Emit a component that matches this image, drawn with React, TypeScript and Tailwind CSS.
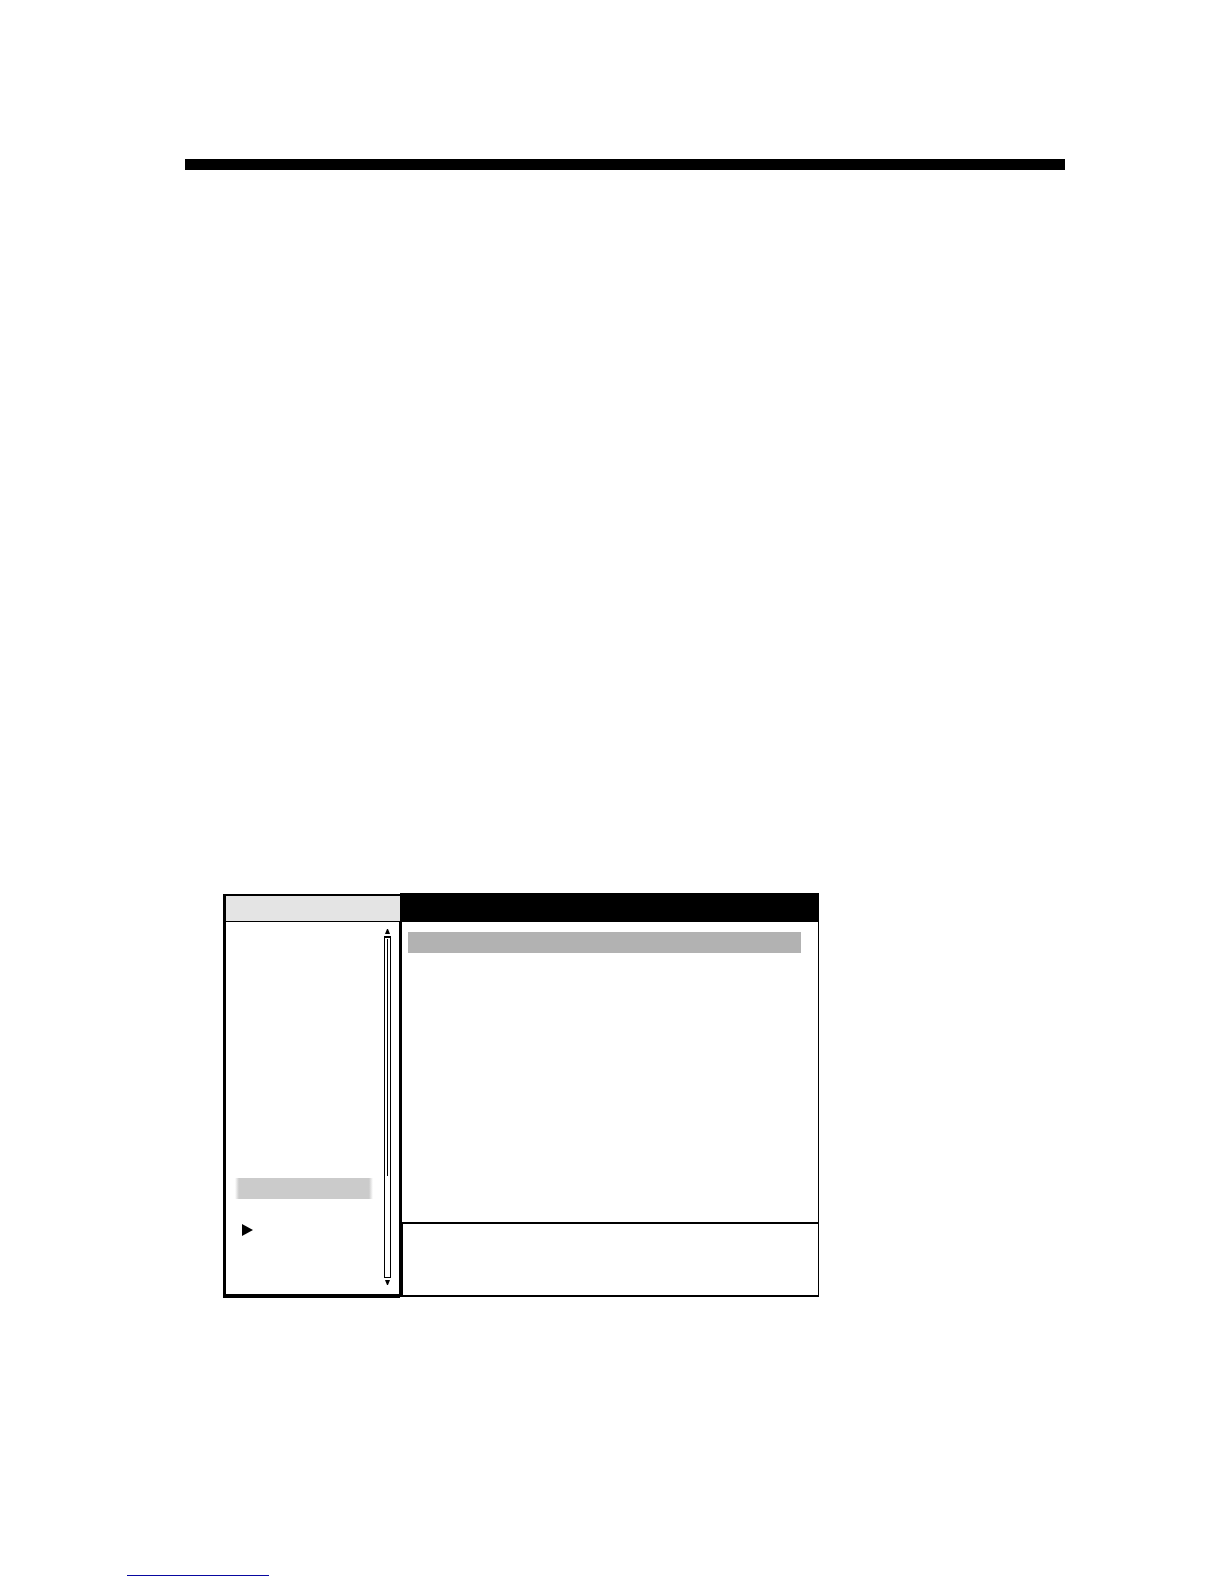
function Triangle({ points, className }: { points: string; className: string }) {
  return (
    <svg viewBox="0 0 10 10" preserveAspectRatio="none" className={className} aria-hidden="true">
      <polygon points={points} fill="currentColor" />
    </svg>
  );
}

function ScrollBar() {
  return (
    <div className="flex w-[7px] flex-col items-center">
      <button type="button" aria-label="Scroll up" className="mb-[2px] block h-[5px] w-[5px]">
        <Triangle points="4,0 6,0 10,10 0,10" className="block h-full w-full" />
      </button>
      <div className="flex w-full flex-1 justify-center border border-t-2 border-black pt-px">
        <div className="h-[237px] w-px bg-black" />
      </div>
      <button type="button" aria-label="Scroll down" className="mt-[2px] block h-[5px] w-[5px]">
        <Triangle points="0,0 10,0 6,10 4,10" className="block h-full w-full" />
      </button>
    </div>
  );
}

function Sidebar() {
  return (
    <aside className="mt-px flex w-[177px] shrink-0 flex-col border-t-2 border-b-4 border-l-[3px] border-black">
      <header className="h-[26px] border-b border-black bg-[#e4e4e4]" />
      <div className="flex flex-1 justify-between border-r border-black pt-[7px] pr-2 pb-[9px] pl-[9px]">
        <div className="flex w-[138px] flex-col pt-[249px]">
          <button
            type="button"
            aria-label="Selected entry"
            className="block h-[21px] w-full bg-[linear-gradient(to_right,white,#cbcbcb_4px,#cbcbcb_134px,white)]"
          />
          {/* current entry marker */}
          <Triangle points="0,0 10,5 0,10" className="mt-[25px] ml-[7px] block h-3 w-[11px]" />
        </div>
        <ScrollBar />
      </div>
    </aside>
  );
}

function Content() {
  return (
    <section className="mb-px flex min-w-0 flex-1 flex-col border-r border-b-2 border-black">
      <header className="h-[29px] bg-black" />
      <div className="h-[300px] border-l-2 border-black pt-[10px] pr-[17px] pl-[6px]">
        <button type="button" aria-label="Selected item" className="block h-[21px] w-full bg-[#b2b2b2]" />
      </div>
      <footer className="h-[73px] border-t-2 border-l-[3px] border-black" />
    </section>
  );
}

export default function App() {
  return (
    <div className="flex min-h-screen flex-col bg-white">
      <div className="pt-[159px] pr-[159px] pl-[185px]">
        <hr className="h-[11px] border-0 bg-black" />
      </div>
      <main className="mt-[723px] px-[223px]">
        <div className="flex w-full max-w-[596px]">
          <Sidebar />
          <Content />
        </div>
      </main>
      <footer className="mt-auto pb-2 pl-[127px]">
        <a href="#" aria-label="Footer link" className="block h-px w-[142px] bg-[#0808a0]" />
      </footer>
    </div>
  );
}
